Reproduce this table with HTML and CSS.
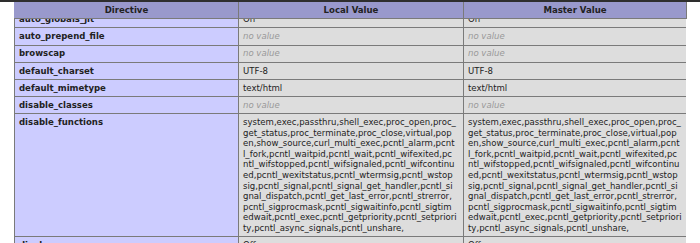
FILE: index.html
```html
<!DOCTYPE html>
<html>
<head>
<meta charset="utf-8">
<link rel="stylesheet" href="styles.css">
</head>
<body>
<div class="topbar"></div>
<div class="wrap">
  <table class="tbl head">
    <colgroup><col class="c1"><col class="c2"><col class="c3"></colgroup>
    <tr class="h"><th>Directive</th><th>Local Value</th><th>Master Value</th></tr>
  </table>
  <div class="clip">
    <table class="tbl body">
      <colgroup><col class="c1"><col class="c2"><col class="c3"></colgroup>
      <tr><td class="e">auto_globals_jit</td><td class="v">On</td><td class="v">On</td></tr>
      <tr><td class="e">auto_prepend_file</td><td class="v"><i>no value</i></td><td class="v"><i>no value</i></td></tr>
      <tr><td class="e">browscap</td><td class="v"><i>no value</i></td><td class="v"><i>no value</i></td></tr>
      <tr><td class="e">default_charset</td><td class="v">UTF-8</td><td class="v">UTF-8</td></tr>
      <tr><td class="e">default_mimetype</td><td class="v">text/html</td><td class="v">text/html</td></tr>
      <tr><td class="e">disable_classes</td><td class="v"><i>no value</i></td><td class="v"><i>no value</i></td></tr>
      <tr><td class="e">disable_functions</td><td class="v fn">system,exec,passthru,shell_exec,proc_open,proc_<br>get_status,proc_terminate,proc_close,virtual,pop<br>en,show_source,curl_multi_exec,pcntl_alarm,pcnt<br>l_fork,pcntl_waitpid,pcntl_wait,pcntl_wifexited,pc<br>ntl_wifstopped,pcntl_wifsignaled,pcntl_wifcontinu<br>ed,pcntl_wexitstatus,pcntl_wtermsig,pcntl_wstop<br>sig,pcntl_signal,pcntl_signal_get_handler,pcntl_si<br>gnal_dispatch,pcntl_get_last_error,pcntl_strerror,<br>pcntl_sigprocmask,pcntl_sigwaitinfo,pcntl_sigtim<br>edwait,pcntl_exec,pcntl_getpriority,pcntl_setpriori<br>ty,pcntl_async_signals,pcntl_unshare,</td><td class="v fn">system,exec,passthru,shell_exec,proc_open,proc_<br>get_status,proc_terminate,proc_close,virtual,pop<br>en,show_source,curl_multi_exec,pcntl_alarm,pcnt<br>l_fork,pcntl_waitpid,pcntl_wait,pcntl_wifexited,pc<br>ntl_wifstopped,pcntl_wifsignaled,pcntl_wifcontinu<br>ed,pcntl_wexitstatus,pcntl_wtermsig,pcntl_wstop<br>sig,pcntl_signal,pcntl_signal_get_handler,pcntl_si<br>gnal_dispatch,pcntl_get_last_error,pcntl_strerror,<br>pcntl_sigprocmask,pcntl_sigwaitinfo,pcntl_sigtim<br>edwait,pcntl_exec,pcntl_getpriority,pcntl_setpriori<br>ty,pcntl_async_signals,pcntl_unshare,</td></tr>
      <tr><td class="e">display_errors</td><td class="v">Off</td><td class="v">Off</td></tr>
    </table>
  </div>
</div>
</body>
</html>
```
FILE: styles.css
```css
html, body {
  margin: 0;
  padding: 0;
  background: #fff;
  color: #222;
  font-family: "DejaVu Sans", sans-serif;
  overflow: hidden;
  height: 243px;
}
.topbar {
  height: 2px;
  background: #2e2e2e;
}
.wrap {
  margin-left: 14px;
  width: 672px;
}
.tbl {
  border-collapse: collapse;
  table-layout: fixed;
  width: 672px;
}
.c1 { width: 224px; }
.c2 { width: 225px; }
.c3 { width: 223px; }
.tbl th, .tbl td {
  border: 1px solid #7a7a7a;
  font-size: 8.55px;
  line-height: 10.55px;
  padding: 2.85px 4px;
  vertical-align: baseline;
  text-align: left;
}
.head th {
  border-top: 0;
  border-color: #9999cc #7a7a7a #7a7a7a #9999cc;
  background: #9999cc;
  text-align: center;
  font-weight: bold;
  padding-top: 2.5px;
  padding-bottom: 2.5px;
}
.head th + th { border-left-color: #9999cc; }
.clip {
  overflow: hidden;
  height: 225px;
}
.body {
  margin-top: -7.5px;
}
.body tr:first-child td { border-top: 0; }
.e {
  background: #ccccff;
  font-weight: bold;
}
.v {
  background: #dddddd;
  overflow-wrap: break-word;
}
.v.fn {
  white-space: nowrap;
  overflow: hidden;
}
.v i {
  color: #999;
}
```
